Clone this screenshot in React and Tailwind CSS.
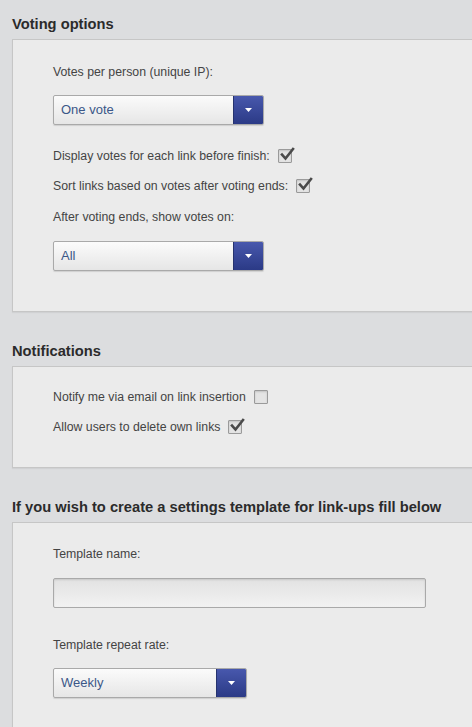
function Check({ checked }) {
  return (
    <span className="relative inline-block w-[14px] h-[14px] border border-[#9a9a9a] bg-[#e4e4e4] shadow-[inset_0_1px_2px_rgba(0,0,0,0.15)] rounded-[1px]">
      {checked && (
        <svg className="absolute left-[1px] top-[-3px]" width="15" height="15" viewBox="0 0 15 15">
          <path d="M2 7.5 L5.5 11.5 L13 2" fill="none" stroke="#4a4a4a" strokeWidth="2.6" strokeLinecap="square" />
        </svg>
      )}
    </span>
  );
}

function Select({ value, width }) {
  return (
    <div
      className="flex h-[30px] border border-[#a9a9a9] rounded-[2px] overflow-hidden bg-gradient-to-b from-[#fbfbfb] to-[#e6e6e6] shadow-[0_1px_1px_rgba(0,0,0,0.12)]"
      style={{ width }}
    >
      <div className="flex-1 flex items-center pl-[7px] text-[13px] text-[#3b5788]">{value}</div>
      <div className="w-[30px] flex items-center justify-center bg-gradient-to-b from-[#4858ad] to-[#2b3a86] border-l border-[#26336f]">
        <svg width="7" height="4" viewBox="0 0 7 4">
          <path d="M0 0 L7 0 L3.5 4 Z" fill="#ffffff" />
        </svg>
      </div>
    </div>
  );
}

function Row({ label, checked }) {
  return (
    <div className="flex items-center h-[16px] gap-[8px]">
      <span>{label}</span>
      <Check checked={checked} />
    </div>
  );
}

function Panel({ children, className }) {
  return (
    <div className={"ml-[12px] bg-[#ebebeb] border-t border-l border-b border-[#c6c6c6] shadow-[0_1px_1px_rgba(0,0,0,0.05)] pl-[40px] " + className}>
      {children}
    </div>
  );
}

function Heading({ children }) {
  return <h2 className="ml-[12px] h-[20px] leading-[20px] text-[14.7px] font-bold text-[#2b2b2b] whitespace-nowrap">{children}</h2>;
}

export default function App() {
  return (
    <div className="w-[472px] h-[727px] overflow-hidden bg-[#dcdddf] pt-[14px] text-[12.3px] text-[#444] font-[Liberation_Sans,Arial,sans-serif]">
      <Heading>Voting options</Heading>
      <Panel className="mt-[5px] h-[273px] pt-[24px]">
        <div className="h-[16px] leading-[16px]">Votes per person (unique IP):</div>
        <div className="mt-[15px]">
          <Select value="One vote" width={211} />
        </div>
        <div className="mt-[23px]">
          <Row label="Display votes for each link before finish:" checked />
        </div>
        <div className="mt-[14px]">
          <Row label="Sort links based on votes after voting ends:" checked />
        </div>
        <div className="mt-[15px] h-[16px] leading-[16px]">After voting ends, show votes on:</div>
        <div className="mt-[16px]">
          <Select value="All" width={211} />
        </div>
      </Panel>

      <div className="mt-[29px]">
        <Heading>Notifications</Heading>
      </div>
      <Panel className="mt-[5px] h-[102px] pt-[22px]">
        <Row label="Notify me via email on link insertion" />
        <div className="mt-[14px]">
          <Row label="Allow users to delete own links" checked />
        </div>
      </Panel>

      <div className="mt-[29px]">
        <Heading>If you wish to create a settings template for link-ups fill below</Heading>
      </div>
      <Panel className="mt-[5px] h-[220px] pt-[23px]">
        <div className="h-[16px] leading-[16px]">Template name:</div>
        <div className="mt-[16px] w-[373px] h-[30px] border border-[#a9a9a9] rounded-[2px] bg-gradient-to-b from-[#e2e2e2] to-[#f2f2f2] shadow-[inset_0_1px_2px_rgba(0,0,0,0.12)]" />
        <div className="mt-[29px] h-[16px] leading-[16px]">Template repeat rate:</div>
        <div className="mt-[15px]">
          <Select value="Weekly" width={194} />
        </div>
      </Panel>
    </div>
  );
}
